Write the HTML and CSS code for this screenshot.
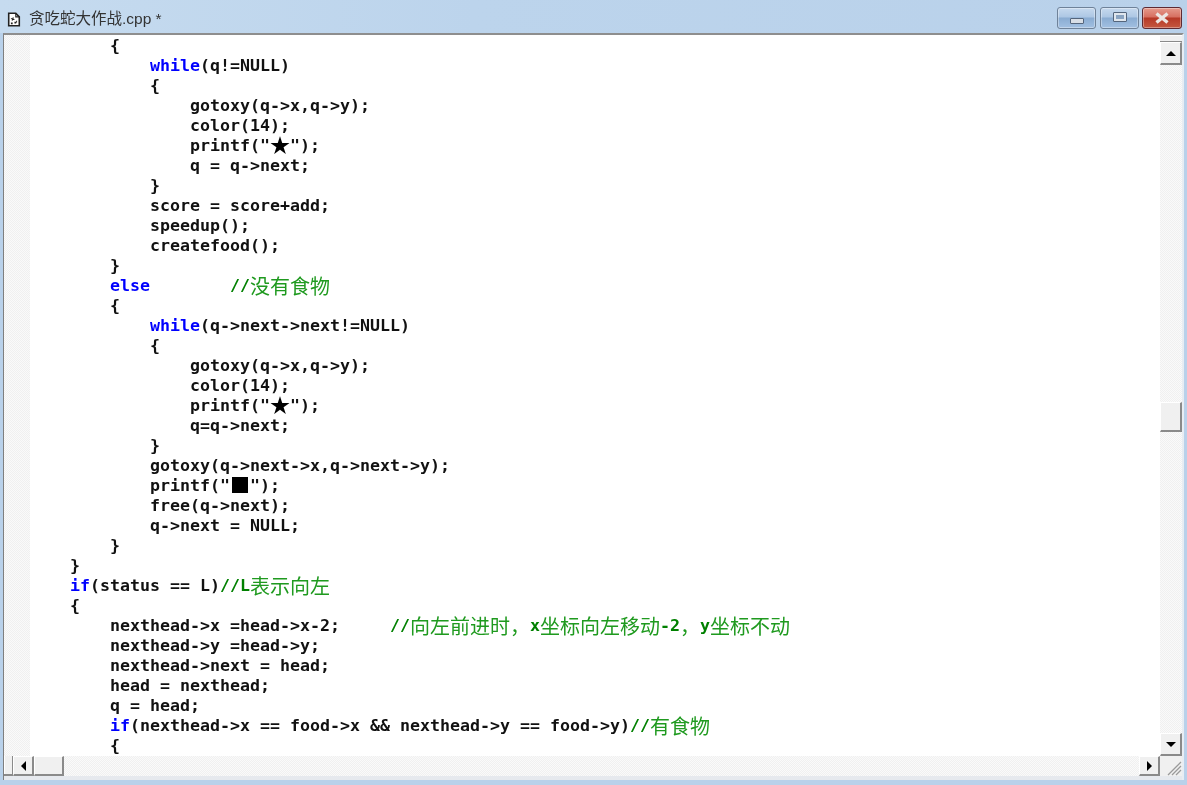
FILE: index.html
```html
<!DOCTYPE html>
<html lang="zh">
<head>
<meta charset="utf-8">
<title>贪吃蛇大作战.cpp</title>
<link rel="stylesheet" href="styles.css">
</head>
<body>
<div class="window">
  <header class="titlebar">
    <svg class="doc-icon" width="14" height="15" viewBox="0 0 15 17"><path d="M1.500 1.500h8l4 4v10h-12z" fill="#fff" stroke="#222" stroke-width="1.800"/><path d="M9.500 1.500v4h4" fill="none" stroke="#222" stroke-width="1.200"/><path d="M4 7h2v-1h1v2h1v1h-2v1h-1v-2h-1zM8 11h2v-1h1v2h-1v1h-2zM4 12h2v2h-2z" fill="#222"/></svg>
    <span class="title">贪吃蛇大作战.cpp *</span>
    <div class="controls">
      <div class="ctl"><span class="glyph-min"></span></div>
      <div class="ctl"><span class="glyph-max"></span></div>
      <div class="ctl close"><svg width="16" height="12" viewBox="0 0 16 12"><path d="M2.500 1.500L13.500 10.500M13.500 1.500L2.500 10.500" fill="none" stroke="#ece6e2" stroke-width="3.400"/></svg></div>
    </div>
  </header>
  <div class="frame">
    <div class="editor">
      <div class="gutter"></div>
      <div class="code">
        <div class="ln i2">{</div>
        <div class="ln i3"><b class="kw">while</b>(q!=NULL)</div>
        <div class="ln i3">{</div>
        <div class="ln i4">gotoxy(q-&gt;x,q-&gt;y);</div>
        <div class="ln i4">color(14);</div>
        <div class="ln i4">printf("<span class="wide">★</span>");</div>
        <div class="ln i4">q = q-&gt;next;</div>
        <div class="ln i3">}</div>
        <div class="ln i3">score = score+add;</div>
        <div class="ln i3">speedup();</div>
        <div class="ln i3">createfood();</div>
        <div class="ln i2">}</div>
        <div class="ln i2"><b class="kw">else</b>        <span class="cm">//<span class="zh">没有食物</span></span></div>
        <div class="ln i2">{</div>
        <div class="ln i3"><b class="kw">while</b>(q-&gt;next-&gt;next!=NULL)</div>
        <div class="ln i3">{</div>
        <div class="ln i4">gotoxy(q-&gt;x,q-&gt;y);</div>
        <div class="ln i4">color(14);</div>
        <div class="ln i4">printf("<span class="wide">★</span>");</div>
        <div class="ln i4">q=q-&gt;next;</div>
        <div class="ln i3">}</div>
        <div class="ln i3">gotoxy(q-&gt;next-&gt;x,q-&gt;next-&gt;y);</div>
        <div class="ln i3">printf("<span class="wide">■</span>");</div>
        <div class="ln i3">free(q-&gt;next);</div>
        <div class="ln i3">q-&gt;next = NULL;</div>
        <div class="ln i2">}</div>
        <div class="ln i1">}</div>
        <div class="ln i1"><b class="kw">if</b>(status == L)<span class="cm">//L<span class="zh">表示向左</span></span></div>
        <div class="ln i1">{</div>
        <div class="ln i2">nexthead-&gt;x =head-&gt;x-2;     <span class="cm">//<span class="zh">向左前进时，</span>x<span class="zh">坐标向左移动</span>-2<span class="zh">，</span>y<span class="zh">坐标不动</span></span></div>
        <div class="ln i2">nexthead-&gt;y =head-&gt;y;</div>
        <div class="ln i2">nexthead-&gt;next = head;</div>
        <div class="ln i2">head = nexthead;</div>
        <div class="ln i2">q = head;</div>
        <div class="ln i2"><b class="kw">if</b>(nexthead-&gt;x == food-&gt;x &amp;&amp; nexthead-&gt;y == food-&gt;y)<span class="cm">//<span class="zh">有食物</span></span></div>
        <div class="ln i2">{</div>
      </div>
      <div class="vscroll">
        <div class="splitter-h"></div>
        <div class="sbtn"><span class="arrow up"></span></div>
        <div class="track"><div class="spacer-a"></div><div class="thumb-v"></div></div>
        <div class="sbtn"><span class="arrow down"></span></div>
      </div>
    </div>
    <div class="hscroll">
      <div class="splitter-v"></div>
      <div class="sbtn-h"><span class="arrow left"></span></div>
      <div class="thumb-h"></div>
      <div class="track-h"></div>
      <div class="sbtn-h"><span class="arrow right"></span></div>
      <div class="grip"><svg width="20" height="20" viewBox="0 0 20 20"><path d="M6 19L19 6M10 19L19 10M14 19L19 14" stroke="#9a9a9a" stroke-width="1.300" fill="none"/></svg></div>
    </div>
  </div>
</div>
</body>
</html>
```
FILE: styles.css
```css
* { box-sizing: border-box; }
html, body { margin: 0; padding: 0; }
body { width: 1187px; height: 785px; overflow: hidden; background: #b9d1ea; }

.window {
  width: 1187px;
  height: 785px;
  display: flex;
  flex-direction: column;
  background: #b9d1ea;
  padding: 0 3px 5px 3px;
}

.titlebar {
  height: 33px;
  flex: none;
  display: flex;
  align-items: center;
  margin-left: -3px;
  margin-right: -3px;
  padding: 0 5px 0 7px;
  background: linear-gradient(90deg, #c6dbef 0, #bcd4ec 40%, #b9d1ea 100%);
}
.doc-icon { flex: none; margin-top: 5px; }
.title {
  margin-left: 8px;
  font: 15.500px "Liberation Sans", "Noto Sans CJK SC", sans-serif;
  color: #333;
  filter: blur(0.3px);
}

.controls { margin-left: auto; margin-top: 3px; display: flex; gap: 4px; }
.ctl {
  width: 39px;
  height: 22px;
  border: 1px solid #6f8299;
  border-radius: 3px;
  background: linear-gradient(#c6d9ee 0, #adc7e4 45%, #8aacd2 50%, #a2c0e2 100%);
  box-shadow: inset 0 0 0 1px rgba(255,255,255,.35);
  display: flex;
  align-items: center;
  justify-content: center;
}
.close {
  width: 40px;
  margin-left: -1px;
  border-color: #5e2a32;
  background: linear-gradient(#e59a8c 0, #d76f60 45%, #b63826 50%, #c45840 100%);
}
.glyph-min {
  width: 14px;
  height: 6px;
  margin-top: 5px;
  background: #d8dee6;
  border: 1px solid #54657c;
  border-radius: 1px;
}
.glyph-max {
  width: 14px;
  height: 10px;
  margin-bottom: 3px;
  background: #8aa4c2;
  border: 1px solid #54657c;
  box-shadow: inset 0 0 0 2px #dfe6ee;
  border-radius: 1px;
}

.frame {
  flex: 1;
  min-height: 0;
  display: flex;
  flex-direction: column;
  border-top: 2px solid #8e8e8e;
  border-left: 1px solid #7f7f7f;
  border-right: 2px solid #e8edf3;
  background: #f0f0f0;
}

.editor { flex: 1; min-height: 0; display: flex; overflow: hidden; }
.gutter {
  width: 26px;
  flex: none;
  background: repeating-conic-gradient(#f0f0f0 0 25%, #fafafa 0 50%) 0 0 / 2px 2px;
}
.code {
  flex: 1;
  min-width: 0;
  padding-top: 1px;
  background: #fff;
  overflow: hidden;
  filter: blur(0.35px);
}
.ln {
  height: 20px;
  line-height: 20px;
  white-space: pre;
  font-family: "DejaVu Sans Mono", "Liberation Mono", monospace;
  font-size: 16.610px;
  font-weight: 700;
  color: #111;
}
.i1 { padding-left: 40px; }
.i2 { padding-left: 80px; }
.i3 { padding-left: 120px; }
.i4 { padding-left: 160px; }
.kw { color: #0000ff; }
.cm { color: #008000; }
.zh {
  font-family: "Noto Sans CJK SC", sans-serif;
  font-size: 20px;
  line-height: 0;
  vertical-align: -3px;
  font-weight: 400;
  color: #1f9a1f;
}
.wide {
  font-family: "Noto Sans CJK SC", sans-serif;
  font-size: 20px;
  line-height: 0;
  vertical-align: -2px;
  font-weight: 400;
  color: #000;
}

.vscroll {
  width: 22px;
  flex: none;
  display: flex;
  flex-direction: column;
  background: repeating-conic-gradient(#f0f0f0 0 25%, #fafafa 0 50%) 0 0 / 2px 2px;
}
.splitter-h {
  height: 7px;
  flex: none;
  background: #f0f0f0;
  border-bottom: 1px solid #8a8a8a;
  box-shadow: inset 0 1px 0 #fff;
}
.sbtn {
  height: 23px;
  flex: none;
  background: #f0f0f0;
  border-style: solid;
  border-width: 1px 2px 2px 1px;
  border-color: #fff #8a8a8a #8a8a8a #fff;
  display: flex;
  align-items: center;
  justify-content: center;
}
.track { flex: 1; min-height: 0; display: flex; flex-direction: column; }
.spacer-a { height: 337px; flex: none; }
.thumb-v {
  height: 30px;
  flex: none;
  background: #f0f0f0;
  border-style: solid;
  border-width: 1px 2px 2px 1px;
  border-color: #fff #8a8a8a #8a8a8a #fff;
}

.arrow { display: block; width: 0; height: 0; border-style: solid; border-color: transparent; }
.up { border-width: 0 5px 5px; border-bottom-color: #000; }
.down { border-width: 5px 5px 0; border-top-color: #000; }
.left { border-width: 5px 5px 5px 0; border-right-color: #000; }
.right { border-width: 5px 0 5px 5px; border-left-color: #000; }

.hscroll {
  height: 24px;
  flex: none;
  display: flex;
  border-bottom: 4px solid #e6e9ee;
  background: #f0f0f0;
}
.splitter-v {
  width: 9px;
  flex: none;
  background: #f0f0f0;
  border-right: 1px solid #8a8a8a;
  border-bottom: 2px solid #8a8a8a;
  box-shadow: inset 1px 0 0 #fff;
}
.sbtn-h {
  width: 21px;
  flex: none;
  background: #f0f0f0;
  border-style: solid;
  border-width: 1px 2px 2px 1px;
  border-color: #fff #8a8a8a #8a8a8a #fff;
  display: flex;
  align-items: center;
  justify-content: center;
}
.thumb-h {
  width: 30px;
  flex: none;
  background: #f0f0f0;
  border-style: solid;
  border-width: 1px 2px 2px 1px;
  border-color: #fff #8a8a8a #8a8a8a #fff;
}
.track-h {
  flex: 1;
  background: repeating-conic-gradient(#f0f0f0 0 25%, #fafafa 0 50%) 0 0 / 2px 2px;
}
.grip { width: 22px; flex: none; background: #f0f0f0; display: flex; align-items: flex-end; justify-content: flex-end; }
```
